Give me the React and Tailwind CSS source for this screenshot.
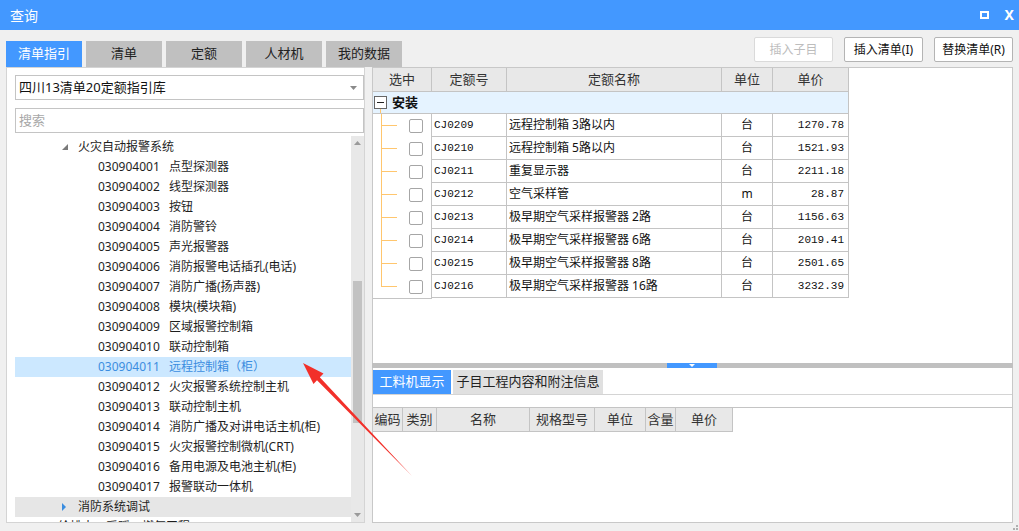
const treeItems = [
    ['030904001', '点型探测器'],
    ['030904002', '线型探测器'],
    ['030904003', '按钮'],
    ['030904004', '消防警铃'],
    ['030904005', '声光报警器'],
    ['030904006', '消防报警电话插孔(电话)'],
    ['030904007', '消防广播(扬声器)'],
    ['030904008', '模块(模块箱)'],
    ['030904009', '区域报警控制箱'],
    ['030904010', '联动控制箱'],
    ['030904011', '远程控制箱（柜）'],
    ['030904012', '火灾报警系统控制主机'],
    ['030904013', '联动控制主机'],
    ['030904014', '消防广播及对讲电话主机(柜)'],
    ['030904015', '火灾报警控制微机(CRT)'],
    ['030904016', '备用电源及电池主机(柜)'],
    ['030904017', '报警联动一体机'],
];

const quotaRows = [
    ['CJ0209', '远程控制箱 3路以内', '台', '1270.78'],
    ['CJ0210', '远程控制箱 5路以内', '台', '1521.93'],
    ['CJ0211', '重复显示器', '台', '2211.18'],
    ['CJ0212', '空气采样管', 'm', '28.87'],
    ['CJ0213', '极早期空气采样报警器 2路', '台', '1156.63'],
    ['CJ0214', '极早期空气采样报警器 6路', '台', '2019.41'],
    ['CJ0215', '极早期空气采样报警器 8路', '台', '2501.65'],
    ['CJ0216', '极早期空气采样报警器 16路', '台', '3232.39'],
];

const tabs = ['清单指引', '清单', '定额', '人材机', '我的数据'];

const lowerCols = [
    ['编码', 'w-[30px]'],
    ['类别', 'w-[34px]'],
    ['名称', 'w-[93px]'],
    ['规格型号', 'w-[65px]'],
    ['单位', 'w-[51px]'],
    ['含量', 'w-[30px]'],
    ['单价', 'w-[57px]'],
];

function TreeRow({ code, name, active }) {
    return (
        <div
            className={
                'h-[20px] flex items-center pl-[83px] text-[12px] whitespace-nowrap ' +
                (active ? 'bg-[#cce8ff] text-[#3b8de0]' : 'text-[#1e1e1e]')
            }
        >
            <span className="w-[71px]">{code}</span>
            <span>{name}</span>
        </div>
    );
}

function QuotaRow({ row, last }) {
    return (
        <div className="flex h-[23px] text-[12px]">
            <div className="w-[59px] flex items-stretch border-r border-[#c4c4c4]">
                <div className="ml-[8px] w-[16px] flex flex-col">
                    <div className="h-[12px] border-l border-b border-[#ffc66e]" />
                    <div className={'flex-1 ' + (last ? '' : 'border-l border-[#ffc66e]')} />
                </div>
                <div className="ml-[12px] self-center w-[14px] h-[14px] border border-[#a6a6a6] rounded-[2px] bg-white" />
            </div>
            <div className="w-[75px] flex items-center pl-[2px] border-r border-b border-[#c4c4c4] font-['Liberation_Mono',monospace] text-[11px] text-[#111]">
                {row[0]}
            </div>
            <div className="w-[215px] flex items-center pl-[2px] border-r border-b border-[#c4c4c4] text-[#111] whitespace-nowrap">
                {row[1]}
            </div>
            <div className="w-[51px] flex items-center justify-center border-r border-b border-[#c4c4c4] text-[#111]">
                {row[2]}
            </div>
            <div className="w-[76px] flex items-center justify-end pr-[4px] border-r border-b border-[#c4c4c4] font-['Liberation_Mono',monospace] text-[11px] text-[#111]">
                {row[3]}
            </div>
        </div>
    );
}

export default function App() {
    return (
        <div className="relative w-[1019px] h-[531px] overflow-hidden bg-[#f0f0f0] font-['Noto_Sans','Noto_Sans_CJK_SC',sans-serif] text-[#222]">
            {/* title bar */}
            <div className="h-[30px] bg-[#4398ff] flex items-center justify-between pl-[10px] pr-[5px] text-white">
                <span className="text-[14px]">查询</span>
                <div className="flex items-center gap-[16px]">
                    <div className="w-[9px] h-[8px] border-2 border-white" />
                    <span className="text-[14px] font-bold leading-none">X</span>
                </div>
            </div>

            {/* tab strip + buttons */}
            <div className="h-[37px] flex justify-between px-[6px]">
                <div className="flex items-end gap-[4px]">
                    {tabs.map((t, i) => (
                        <div
                            key={t}
                            className={
                                'w-[76px] h-[26px] flex items-center justify-center text-[13px] ' +
                                (i === 0 ? 'bg-[#4398ff] text-white' : 'bg-[#c0c0c0] text-[#222]')
                            }
                        >
                            {t}
                        </div>
                    ))}
                </div>
                <div className="flex gap-[11px] pt-[7px]">
                    <div className="w-[79px] h-[25px] flex items-center justify-center bg-white border border-[#dadada] rounded-[2px] text-[12px] text-[#bdbdbd]">
                        插入子目
                    </div>
                    <div className="w-[79px] h-[25px] flex items-center justify-center bg-white border border-[#b4b4b4] rounded-[2px] text-[12px] text-[#111]">
                        插入清单(I)
                    </div>
                    <div className="w-[79px] h-[25px] flex items-center justify-center bg-white border border-[#b4b4b4] rounded-[2px] text-[12px] text-[#111]">
                        替换清单(R)
                    </div>
                </div>
            </div>

            {/* main area */}
            <div className="flex gap-[7px] px-[6px] h-[456px]">
                {/* left panel */}
                <div className="w-[359px] h-full bg-white border border-[#d4d4d4] pl-[8px] pt-[7px] flex flex-col">
                    <div className="h-[25px] border border-[#c4c4c4] flex items-center justify-between pl-[3px] pr-[6px] text-[13px] text-[#111]">
                        <span>四川13清单20定额指引库</span>
                        <svg width="7" height="4" viewBox="0 0 7 4">
                            <polygon points="0,0 7,0 3.5,4" fill="#8a8a8a" />
                        </svg>
                    </div>
                    <div className="mt-[8px] h-[25px] border border-[#c4c4c4] flex items-center pl-[3px] text-[13px] text-[#a8a8a8]">
                        搜索
                    </div>
                    <div className="mt-[3px] flex-1 flex min-h-0">
                        <div className="flex-1 pt-[1px] overflow-hidden">
                            <div className="h-[20px] flex items-center text-[12px] text-[#1e1e1e]">
                                <svg className="ml-[47px]" width="6" height="6" viewBox="0 0 6 6">
                                    <polygon points="6,0 6,6 0,6" fill="#7a7a7a" />
                                </svg>
                                <span className="ml-[10px]">火灾自动报警系统</span>
                            </div>
                            {treeItems.map(([c, n]) => (
                                <TreeRow key={c} code={c} name={n} active={c === '030904011'} />
                            ))}
                            <div className="h-[20px] flex items-center bg-[#e6e6e6] text-[12px] text-[#1e1e1e]">
                                <svg className="ml-[47px]" width="4" height="8" viewBox="0 0 4 8">
                                    <polygon points="0,0 4,4 0,8" fill="#3b8de0" />
                                </svg>
                                <span className="ml-[12px]">消防系统调试</span>
                            </div>
                            <div className="h-[20px] flex items-center text-[12px] text-[#1e1e1e]">
                                <span className="ml-[43px]">给排水、采暖、燃气工程</span>
                            </div>
                        </div>
                        <div className="w-[13px] bg-[#e8e8e8] flex flex-col">
                            <div className="h-[14px] flex items-center justify-center">
                                <svg width="7" height="4" viewBox="0 0 7 4">
                                    <polygon points="0,4 7,4 3.5,0" fill="#9a9a9a" />
                                </svg>
                            </div>
                            <div className="flex-1">
                                <div className="mt-[131px] h-[142px] w-[9px] mx-auto bg-[#c2c2c2]" />
                            </div>
                            <div className="h-[14px] flex items-center justify-center">
                                <svg width="7" height="4" viewBox="0 0 7 4">
                                    <polygon points="0,0 7,0 3.5,4" fill="#9a9a9a" />
                                </svg>
                            </div>
                        </div>
                    </div>
                </div>

                {/* right column */}
                <div className="w-[641px] h-full flex flex-col">
                    <div className="h-[296px] bg-white border border-[#c8c8c8] border-b-0">
                        <div className="w-[476px]">
                            <div className="flex h-[24px] bg-[#e8e8e8] text-[13px] text-[#333]">
                                {[
                                    ['选中', 'w-[59px]'],
                                    ['定额号', 'w-[75px]'],
                                    ['定额名称', 'w-[215px]'],
                                    ['单位', 'w-[51px]'],
                                    ['单价', 'w-[76px]'],
                                ].map(([t, w]) => (
                                    <div
                                        key={t}
                                        className={w + ' flex items-center justify-center border-r border-b border-[#c4c4c4]'}
                                    >
                                        {t}
                                    </div>
                                ))}
                            </div>
                            <div className="flex h-[22px] bg-[#e5f3ff] border-r border-b border-[#c4c4c4]">
                                <div className="ml-[1px] w-[13px] flex flex-col items-center">
                                    <div className="mt-[4px] w-[13px] h-[13px] border border-[#666] bg-white flex items-center justify-center">
                                        <div className="w-[7px] h-[1px] bg-[#222]" />
                                    </div>
                                    <div className="flex-1 border-l border-[#ffc66e]" />
                                </div>
                                <span className="ml-[5px] self-center text-[13px] font-bold text-[#111]">安装</span>
                            </div>
                            {quotaRows.map((r, i) => (
                                <QuotaRow key={r[0]} row={r} last={i === quotaRows.length - 1} />
                            ))}
                            <div className="h-[1px] w-[59px] bg-[#c4c4c4]" />
                        </div>
                    </div>

                    {/* splitter */}
                    <div className="h-[5px] bg-[#c0c0c0] flex pl-[295px]">
                        <div className="w-[50px] bg-[#4398ff] flex items-center justify-center">
                            <svg width="6" height="3" viewBox="0 0 6 3">
                                <polygon points="0,0 6,0 3,3" fill="#fff" />
                            </svg>
                        </div>
                    </div>

                    {/* lower panel */}
                    <div className="flex-1 bg-white border border-[#c8c8c8] border-t-0 flex flex-col">
                        <div className="mt-[2px] h-[25px] flex gap-[2px] border-b border-[#d4d4d4]">
                            <div className="w-[78px] flex items-center justify-center bg-[#4398ff] text-white text-[13px]">
                                工料机显示
                            </div>
                            <div className="w-[150px] flex items-center justify-center bg-[#e0e0e0] text-[#222] text-[13px]">
                                子目工程内容和附注信息
                            </div>
                        </div>
                        <div className="mt-[12px] flex-1 border-t border-[#c4c4c4]">
                            <div className="flex h-[24px] bg-[#e8e8e8] w-fit text-[13px] text-[#333]">
                                {lowerCols.map(([t, w]) => (
                                    <div
                                        key={t}
                                        className={w + ' flex items-center justify-center border-r border-b border-[#c4c4c4]'}
                                    >
                                        {t}
                                    </div>
                                ))}
                            </div>
                        </div>
                    </div>
                </div>
            </div>

            {/* resize grip */}
            <div className="absolute right-[1px] bottom-[1px] grid grid-cols-2 gap-[1px]">
                <div className="w-[2px] h-[2px]" />
                <div className="w-[2px] h-[2px] bg-[#b0b0b0]" />
                <div className="w-[2px] h-[2px] bg-[#b0b0b0]" />
                <div className="w-[2px] h-[2px] bg-[#b0b0b0]" />
            </div>

            {/* annotation arrow */}
            <svg className="absolute inset-0 pointer-events-none" width="1019" height="531" viewBox="0 0 1019 531">
                <polygon
                    points="303,363 323.5,373.5 319.8,377.3 412,476 317,380.3 313.5,384"
                    fill="#f2302a"
                />
            </svg>
        </div>
    );
}
